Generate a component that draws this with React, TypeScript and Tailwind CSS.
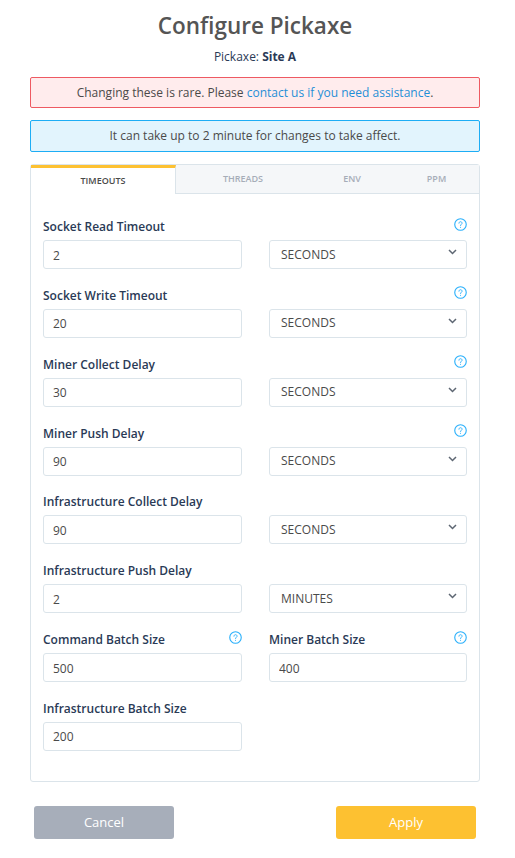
import React from "react";

type Row = { label: string; value: string; unit: string; help?: boolean };

const rows: Row[] = [
  { label: "Socket Read Timeout", value: "2", unit: "SECONDS", help: true },
  { label: "Socket Write Timeout", value: "20", unit: "SECONDS", help: true },
  { label: "Miner Collect Delay", value: "30", unit: "SECONDS", help: true },
  { label: "Miner Push Delay", value: "90", unit: "SECONDS", help: true },
  { label: "Infrastructure Collect Delay", value: "90", unit: "SECONDS" },
  { label: "Infrastructure Push Delay", value: "2", unit: "MINUTES" },
];

const HelpIcon = () => (
  <svg width="13" height="13" viewBox="0 0 14 14" fill="none" className="shrink-0">
    <circle cx="7" cy="7" r="6.2" stroke="#2ab0fb" strokeWidth="1.2" />
    <path
      d="M5.3 5.6c0-1 .8-1.6 1.7-1.6s1.7.6 1.7 1.5c0 1.2-1.7 1.3-1.7 2.6"
      stroke="#2ab0fb"
      strokeWidth="1"
      strokeLinecap="round"
    />
    <circle cx="7" cy="10" r=".6" fill="#2ab0fb" />
  </svg>
);

const Label = ({ text, help }: { text: string; help?: boolean }) => (
  <div className="flex h-[17px] items-center justify-between">
    <span className="pt-[1px] text-[12px] font-semibold text-[#2a3a56]">{text}</span>
    {help && (
      <span className="-mt-[5px]">
        <HelpIcon />
      </span>
    )}
  </div>
);

const TextField = ({ value }: { value: string }) => (
  <input
    defaultValue={value}
    className="h-[29px] w-full rounded-[3px] border border-[#dbe4ea] bg-white px-[9px] pt-[1px] text-[12px] text-[#4a4a4a] outline-none"
  />
);

const UnitSelect = ({ value }: { value: string }) => (
  <div className="relative">
    <select
      defaultValue={value}
      className="h-[29px] w-full appearance-none rounded-[3px] border border-[#dbe4ea] bg-white px-[11px] text-[12px] text-[#4a4a4a] outline-none"
    >
      <option>SECONDS</option>
      <option>MINUTES</option>
    </select>
    <svg
      width="9"
      height="6"
      viewBox="0 0 9 6"
      fill="none"
      className="pointer-events-none absolute right-[10px] top-[9px]"
    >
      <path d="M1 1l3.5 3.5L8 1" stroke="#5d6672" strokeWidth="1.5" />
    </svg>
  </div>
);

export default function App() {
  return (
    <div className="min-h-[858px] w-[515px] bg-white font-['Open_Sans','Noto_Sans',sans-serif]">
      <div className="pl-[30px] pr-[35px]">
        <h1 className="pt-[11px] text-center text-[22.5px] leading-[30px] font-semibold text-[#555555]">
          Configure Pickaxe
        </h1>
        <p className="mt-[6px] text-center text-[12px] leading-[20px] text-[#2a3a56]">
          Pickaxe: <b className="font-bold">Site A</b>
        </p>

        <div className="mt-[10px] flex h-[31px] items-center justify-center rounded-[2px] border border-[#ee5a62] bg-[#ffeced] text-[12px] text-[#4a4a4a]">
          <span>
            Changing these is rare. Please{" "}
            <a className="text-[#1f8fd6]">contact us if you need assistance</a>.
          </span>
        </div>
        <div className="mt-[12px] flex h-[32px] items-center justify-center rounded-[2px] border border-[#1dadf5] bg-[#e2f4fd] text-[12px] text-[#4a4a4a]">
          It can take up to 2 minute for changes to take affect.
        </div>

        <div className="mt-[12px] h-[618px] rounded-[3px] border border-[#dbe4ea]">
          <div className="flex h-[29px] text-[9px] font-semibold">
            <div className="flex w-[145px] items-center justify-center border-t-[3px] border-r border-t-[#fdc131] border-r-[#dbe4ea] bg-white text-[#4a4a4a]">
              TIMEOUTS
            </div>
            <div className="flex flex-1 items-center border-b border-[#dbe4ea] bg-[#f5f7f9] text-[#a6adb8]">
              <span className="w-[134px] text-center">THREADS</span>
              <span className="w-[84px] text-center">ENV</span>
              <span className="flex-1 text-center">PPM</span>
            </div>
          </div>

          <div className="flex flex-col gap-[17.85px] px-[12px] pt-[24px]">
            {rows.map((row) => (
              <div key={row.label} className="grid grid-cols-[199px_198px] gap-x-[27px] gap-y-[5px]">
                <div className="col-span-2">
                  <Label text={row.label} help={row.help} />
                </div>
                <TextField value={row.value} />
                <UnitSelect value={row.unit} />
              </div>
            ))}

            <div className="grid grid-cols-[199px_198px] gap-x-[27px] gap-y-[5px]">
              <Label text="Command Batch Size" help />
              <Label text="Miner Batch Size" help />
              <TextField value="500" />
              <TextField value="400" />
            </div>

            <div className="grid grid-cols-[199px_198px] gap-x-[27px] gap-y-[5px]">
              <div className="col-start-1">
                <Label text="Infrastructure Batch Size" />
              </div>
              <div className="col-start-1">
                <TextField value="200" />
              </div>
            </div>
          </div>
        </div>

        <div className="mt-[24px] flex justify-between px-[4px]">
          <button className="h-[33px] w-[140px] rounded-[3px] bg-[#a7aeba] text-[13px] text-white">Cancel</button>
          <button className="h-[33px] w-[140px] rounded-[3px] bg-[#fdc131] text-[13px] text-white">Apply</button>
        </div>
      </div>
    </div>
  );
}
